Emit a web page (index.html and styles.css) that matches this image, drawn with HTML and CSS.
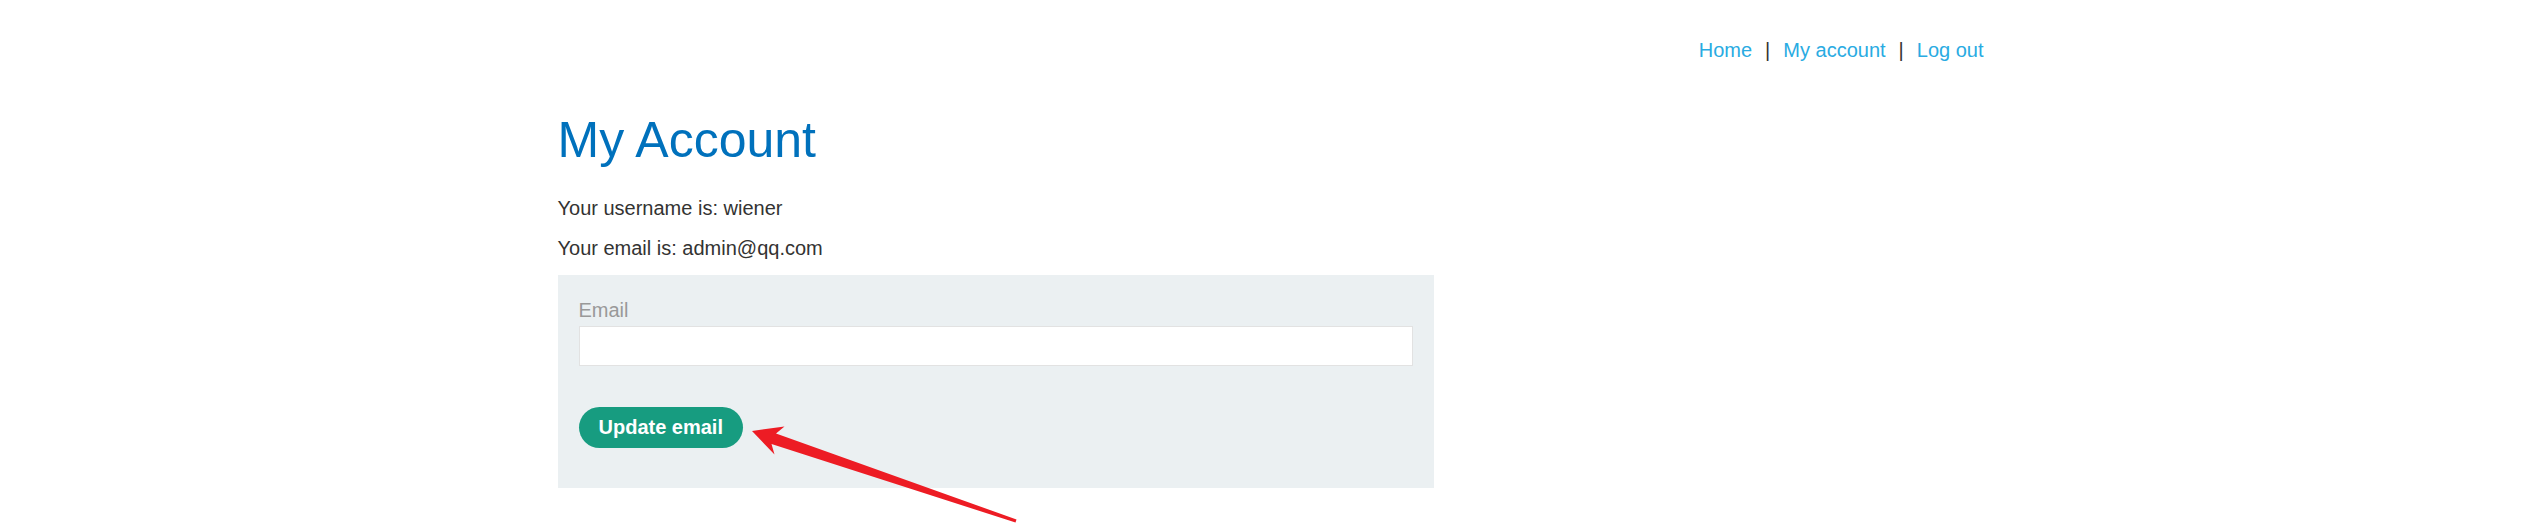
FILE: index.html
```html
<!DOCTYPE html>
<html lang="en">
<head>
  <meta charset="UTF-8">
  <title>My Account</title>
  <link rel="stylesheet" href="styles.css">
</head>
<body>
  <div class="container">
    <header class="top-links">
      <a href="#">Home</a>
      <span class="sep">|</span>
      <a href="#">My account</a>
      <span class="sep">|</span>
      <a href="#">Log out</a>
    </header>

    <h1>My Account</h1>
    <p class="info">Your username is: wiener</p>
    <p class="info">Your email is: admin@qq.com</p>

    <form class="login-form" onsubmit="return false">
      <label class="form-label" for="email">Email</label>
      <input class="form-input" id="email" type="email" name="email">
      <button class="button" type="submit">Update email</button>
    </form>
  </div>

  <!-- seta vermelha da captura, por cima da pagina -->
  <svg class="arrow" viewBox="0 0 2541 525" width="2541" height="525">
    <polygon fill="#ed1c24" points="752,431 784.5,426.5 776,433.5 1016.5,519.5 1015.5,522.5 771.5,444 774.5,454.5"/>
  </svg>
</body>
</html>
```

FILE: styles.css
```css
body {
    margin: 0;
    background: #fff;
    font-family: "Liberation Sans", Arial, sans-serif;
    font-size: 20px;
    color: #333332;
}
.container {
    width: 1426px;
    margin: 0 auto;
}
.top-links {
    display: flex;
    justify-content: flex-end;
    gap: 13px;
    padding-top: 39px;
    line-height: 23px;
}
.top-links a {
    color: #29abe2;
    text-decoration: none;
}
.top-links .sep { color: #333332; }
h1 {
    margin: 51px 0 0;
    font-size: 50px;
    font-weight: normal;
    line-height: 55px;
    color: #0071bc;
}
.info {
    margin: 29px 0 0;
    line-height: 23px;
}
.info + .info { margin-top: 17px; }
.login-form {
    width: 876px;
    box-sizing: border-box;
    margin-top: 15px;
    padding: 24px 21px 40px;
    background: #ebf0f2;
}
.form-label {
    display: block;
    line-height: 23px;
    margin-bottom: 4px;
    color: #999;
}
.form-input {
    display: block;
    width: 100%;
    height: 40px;
    box-sizing: border-box;
    margin: 0 0 41px;
    border: 1px solid #e2e2e2;
    background: #fff;
    font: inherit;
}
.button {
    display: block;
    height: 41px;
    padding: 0 20px;
    border: none;
    border-radius: 21px;
    background: #179c80;
    color: #fff;
    font: bold 20px "Liberation Sans", Arial, sans-serif;
    line-height: 41px;
    cursor: pointer;
}
.arrow {
    position: absolute;
    left: 0;
    top: 0;
    pointer-events: none;
}
```
